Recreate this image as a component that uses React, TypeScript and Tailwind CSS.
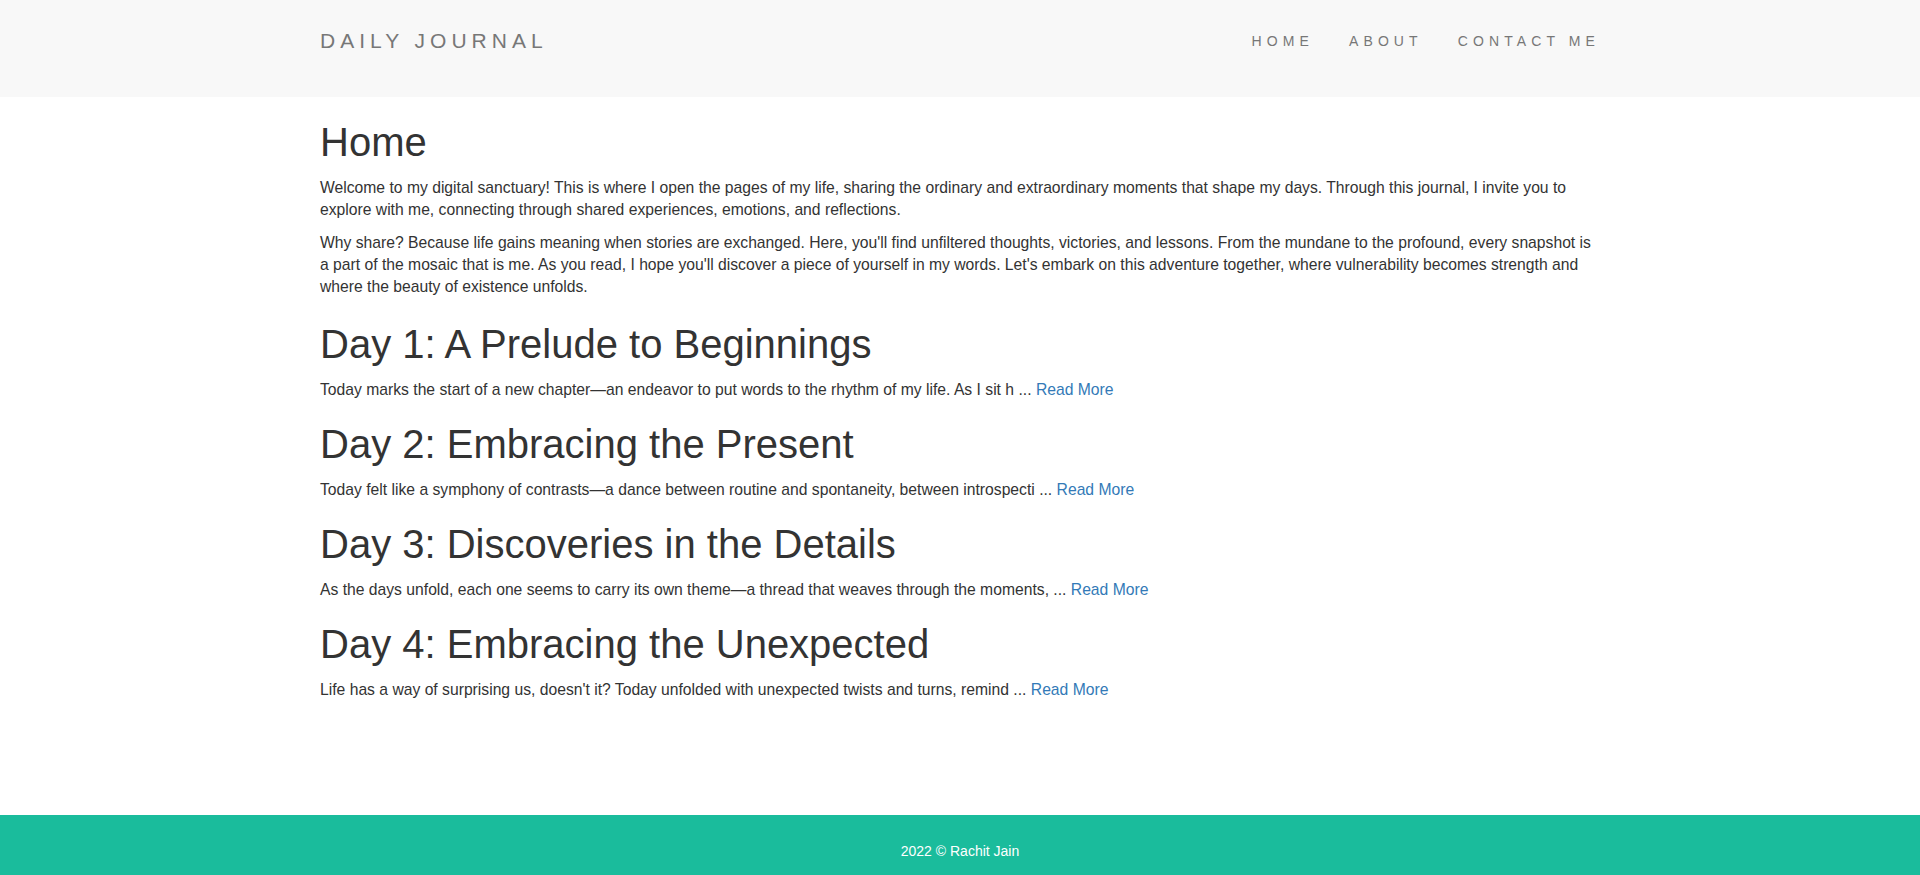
const posts = [
  {
    title: 'Day 1: A Prelude to Beginnings',
    excerpt: 'Today marks the start of a new chapter—an endeavor to put words to the rhythm of my life. As I sit h',
  },
  {
    title: 'Day 2: Embracing the Present',
    excerpt: 'Today felt like a symphony of contrasts—a dance between routine and spontaneity, between introspecti',
  },
  {
    title: 'Day 3: Discoveries in the Details',
    excerpt: 'As the days unfold, each one seems to carry its own theme—a thread that weaves through the moments, ',
  },
  {
    title: 'Day 4: Embracing the Unexpected',
    excerpt: "Life has a way of surprising us, doesn't it? Today unfolded with unexpected twists and turns, remind",
  },
];

export default function App() {
  return (
    <div className="flex flex-col min-h-[875px] bg-white text-[#333] font-['Liberation_Sans',Arial,sans-serif]">
      <header className="bg-[#f8f8f8] pb-4">
        <div className="w-[1280px] mx-auto h-[81px] flex items-center justify-between">
          <a href="#" className="text-[21px] leading-[30px] tracking-[5px] text-[#777]">
            DAILY JOURNAL
          </a>
          <ul className="flex items-center gap-[35px]">
            {['HOME', 'ABOUT', 'CONTACT ME'].map(link => (
              <li key={link}>
                <a href="#" className="text-[14px] leading-[21px] tracking-[5.1px] text-[#777]">
                  {link}
                </a>
              </li>
            ))}
          </ul>
        </div>
      </header>

      <main className="w-[1280px] mx-auto pt-[21px] text-[15.7px] leading-[22px]">
        <h1 className="text-[40px] leading-[48px] font-normal mb-[11px]">Home</h1>
        <p className="mb-[11px]">
          Welcome to my digital sanctuary! This is where I open the pages of my life, sharing the ordinary and
          extraordinary moments that shape my days. Through this journal, I invite you to explore with me,
          connecting through shared experiences, emotions, and reflections.
        </p>
        <p>
          Why share? Because life gains meaning when stories are exchanged. Here, you'll find unfiltered thoughts,
          victories, and lessons. From the mundane to the profound, every snapshot is a part of the mosaic that is
          me. As you read, I hope you'll discover a piece of yourself in my words. Let's embark on this adventure
          together, where vulnerability becomes strength and where the beauty of existence unfolds.
        </p>

        <div className="mt-[22px] flex flex-col gap-[19px]">
          {posts.map(post => (
            <div key={post.title}>
              <h1 className="text-[40px] leading-[48px] font-normal mb-[11px]">{post.title}</h1>
              <p>
                {post.excerpt} ...{' '}
                <a href="#" className="text-[#337ab7]">
                  Read More
                </a>
              </p>
            </div>
          ))}
        </div>
      </main>

      <footer className="mt-auto h-[60px] bg-[#1abc9c] text-center">
        <p className="pt-[26px] text-[14px] leading-[20px] text-white">2022 © Rachit Jain</p>
      </footer>
    </div>
  );
}
